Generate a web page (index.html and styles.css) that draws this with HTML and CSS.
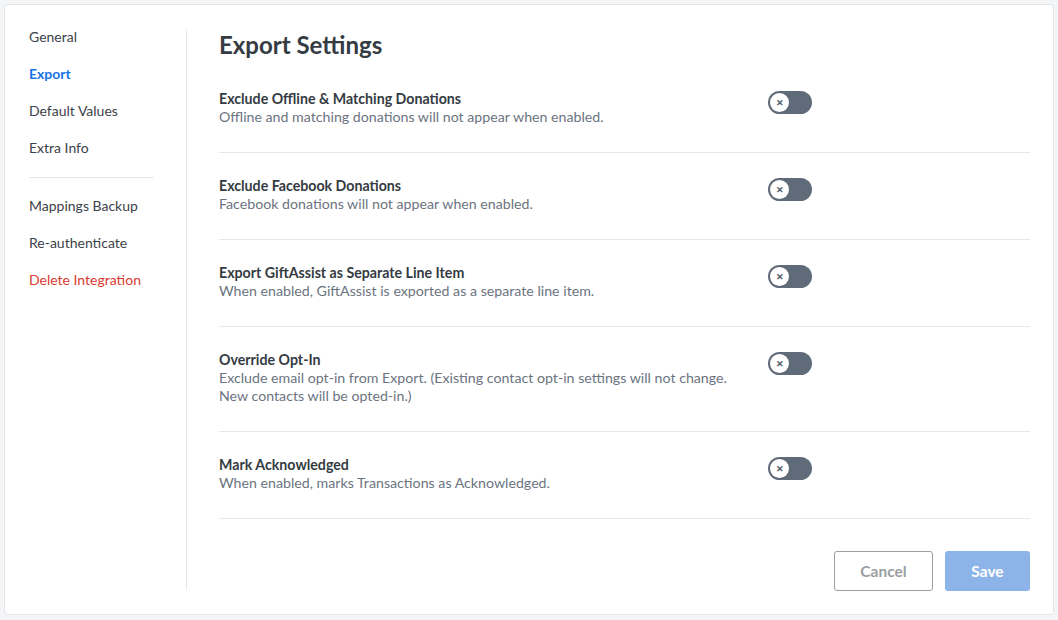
FILE: index.html
```html
<!DOCTYPE html>
<html>
<head>
  <meta charset="UTF-8">
  <title>Export Settings</title>
  <link rel="stylesheet" href="styles.css">
</head>
<body>
  <div class="card">
    <div class="sidebar">
      <a class="nav-item">General</a>
      <a class="nav-item active">Export</a>
      <a class="nav-item">Default Values</a>
      <a class="nav-item">Extra Info</a>
      <div class="nav-divider"></div>
      <a class="nav-item">Mappings Backup</a>
      <a class="nav-item">Re-authenticate</a>
      <a class="nav-item danger">Delete Integration</a>
    </div>

    <div class="main">
      <h1 class="page-title">Export Settings</h1>

      <div class="setting">
        <div class="setting-text">
          <div class="setting-title">Exclude Offline &amp; Matching Donations</div>
          <div class="setting-desc">Offline and matching donations will not appear when enabled.</div>
        </div>
        <span class="toggle"><span class="knob">&#x2715;</span></span>
      </div>

      <div class="setting">
        <div class="setting-text">
          <div class="setting-title">Exclude Facebook Donations</div>
          <div class="setting-desc">Facebook donations will not appear when enabled.</div>
        </div>
        <span class="toggle"><span class="knob">&#x2715;</span></span>
      </div>

      <div class="setting">
        <div class="setting-text">
          <div class="setting-title">Export GiftAssist as Separate Line Item</div>
          <div class="setting-desc">When enabled, GiftAssist is exported as a separate line item.</div>
        </div>
        <span class="toggle"><span class="knob">&#x2715;</span></span>
      </div>

      <div class="setting">
        <div class="setting-text">
          <div class="setting-title">Override Opt-In</div>
          <div class="setting-desc">Exclude email opt-in from Export. (Existing contact opt-in settings will not change. New contacts will be opted-in.)</div>
        </div>
        <span class="toggle"><span class="knob">&#x2715;</span></span>
      </div>

      <div class="setting">
        <div class="setting-text">
          <div class="setting-title">Mark Acknowledged</div>
          <div class="setting-desc">When enabled, marks Transactions as Acknowledged.</div>
        </div>
        <span class="toggle"><span class="knob">&#x2715;</span></span>
      </div>

      <div class="actions">
        <button class="btn btn-cancel">Cancel</button>
        <button class="btn btn-save">Save</button>
      </div>
    </div>
  </div>
</body>
</html>
```

FILE: styles.css
```css
body {
  margin: 0;
  padding: 4px;
  background-color: #f4f5f7;
  font-family: Lato, "Open Sans", Arial, sans-serif;
  color: #353b42;
}

.card {
  display: flex;
  height: 611px;
  box-sizing: border-box;
  background-color: #fff;
  border: 1px solid #e3e5e8;
  border-radius: 4px;
}

/* 左侧导航 */
.sidebar {
  width: 125px;
  margin: 25px 0 24px;
  padding: 0 32px 0 24px;
  border-right: 1px solid #e6e8eb;
  display: flex;
  flex-direction: column;
}
.nav-item {
  font-size: 14px;
  line-height: 14px;
  margin-bottom: 23px;
  color: #3c4249;
  cursor: pointer;
}
.nav-item.active {
  color: #1a73e8;
  font-weight: bold;
}
.nav-item.danger {
  color: #d93b30;
}
.nav-divider {
  height: 1px;
  background-color: #e3e5e8;
  margin: -1px 0 21px;
}

/* 主内容 */
.main {
  flex: 1;
  padding: 26px 23px 0 32px;
}
.page-title {
  margin: 0 0 7px;
  font-size: 24px;
  line-height: 28px;
  font-weight: bold;
  color: #353b42;
}
.setting {
  display: grid;
  grid-template-columns: 549px 44px;
  padding: 24px 0 26px;
  border-bottom: 1px solid #e6e8eb;
}
.setting-text {
  padding-right: 20px;
}
.setting-title {
  font-size: 14.2px;
  line-height: 18px;
  font-weight: bold;
  color: #353b42;
}
.setting-desc {
  font-size: 14.2px;
  line-height: 18px;
  color: #6b7480;
}

.toggle {
  margin-top: 1px;
  width: 44px;
  height: 23px;
  border-radius: 12px;
  background-color: #5f6b78;
  display: flex;
  align-items: center;
  padding-left: 2px;
  box-sizing: border-box;
}
.knob {
  width: 19px;
  height: 19px;
  border-radius: 50%;
  background-color: #fff;
  color: #4f5a66;
  font-size: 9px;
  font-weight: bold;
  display: flex;
  align-items: center;
  justify-content: center;
}

.actions {
  display: flex;
  justify-content: flex-end;
  gap: 12px;
  margin-top: 32px;
}
.btn {
  height: 40px;
  border-radius: 3px;
  font-family: Lato, "Open Sans", Arial, sans-serif;
  font-size: 15.5px;
  font-weight: bold;
  cursor: pointer;
}
.btn-cancel {
  width: 99px;
  background-color: #fff;
  border: 1px solid #9b9ea2;
  color: #9b9ea2;
}
.btn-save {
  width: 85px;
  background-color: #8db4e8;
  border: none;
  color: #fff;
}
```
